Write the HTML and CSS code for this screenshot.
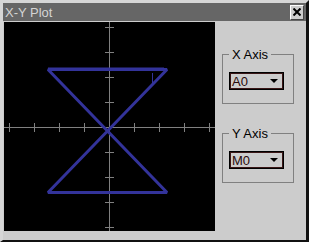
FILE: index.html
```html
<!DOCTYPE html>
<html lang="en">
<head>
    <meta charset="UTF-8">
    <title>X-Y Plot</title>
    <link rel="stylesheet" href="styles.css">
</head>
<body>
    <div class="window">
        <div class="titlebar">
            <span class="title">X-Y Plot</span>
            <button class="close-btn" aria-label="Close">
                <svg width="8" height="8" viewBox="0 0 8 8">
                    <path d="M0.5 0.5 L7.5 7.5 M7.5 0.5 L0.5 7.5" stroke="#000" stroke-width="2" fill="none"/>
                </svg>
            </button>
        </div>

        <div class="content">
            <div class="plot">
                <svg width="211" height="209" viewBox="0 0 211 209">
                    <g stroke="#808080" stroke-width="1" fill="none" shape-rendering="crispEdges">
                        <path d="M0 105.5 H211 M105.5 0 V209"/>
                        <path d="M5.5 101 V110 M30.5 101 V110 M55.5 101 V110 M80.5 101 V110 M130.5 101 V110 M155.5 101 V110 M180.5 101 V110 M205.5 101 V110"/>
                        <path d="M101 5.5 H110 M101 30.5 H110 M101 55.5 H110 M101 80.5 H110 M101 130.5 H110 M101 155.5 H110 M101 180.5 H110 M101 205.5 H110"/>
                    </g>
                    <g stroke="#33339a" fill="none" stroke-linejoin="bevel">
                        <path d="M44 47.5 H163 L44 170.5 H163 Z" stroke-width="3"/>
                        <path d="M44 46.5 H160 M92 171 H152" stroke-width="2"/>
                        <path d="M148.5 51 V63" stroke-width="1"/>
                    </g>
                </svg>
            </div>

            <div class="side">
                <fieldset class="group">
                    <legend>X Axis</legend>
                    <div class="combo">
                        <span>A0</span>
                        <i class="arrow"></i>
                    </div>
                </fieldset>

                <fieldset class="group">
                    <legend>Y Axis</legend>
                    <div class="combo">
                        <span>M0</span>
                        <i class="arrow"></i>
                    </div>
                </fieldset>
            </div>
        </div>
    </div>
</body>
</html>
```

FILE: styles.css
```css
body {
    margin: 0;
    background: #ccc;
    font-family: "Liberation Sans", Arial, sans-serif;
}
.window {
    width: 309px;
    height: 242px;
    box-sizing: border-box;
    background: #ccc;
    border-top: 3px solid #d6d6d6;
    border-left: 3px solid #d6d6d6;
    border-right: 3px solid #111;
    border-bottom: 2px solid #111;
    display: flex;
    flex-direction: column;
}
.titlebar {
    height: 18px;
    background: #666;
    display: flex;
    align-items: center;
    justify-content: space-between;
    padding: 0 2px 0 2px;
}
.title {
    color: #d4d4d4;
    font-size: 13px;
    line-height: 13px;
}
.close-btn {
    width: 14px;
    height: 15px;
    padding: 0;
    background: #ccc;
    border: 1px solid;
    border-color: #fff #444 #444 #fff;
    display: flex;
    align-items: center;
    justify-content: center;
}
.content {
    flex: 1;
    display: flex;
    padding: 1px 0 0 1px;
}
.plot {
    width: 211px;
    height: 209px;
    background: #000;
}
.plot svg {
    display: block;
}
.side {
    margin-left: 7px;
    padding-top: 26px;
}
.group {
    width: 72px;
    box-sizing: border-box;
    margin: 0 0 23px 0;
    padding: 0 0 13px 6px;
    border: 1px solid #808080;
}
.group legend {
    padding: 0 3px;
    font-size: 13px;
    line-height: 13px;
    color: #000;
}
.combo {
    width: 55px;
    height: 18px;
    margin-top: 11px;
    box-sizing: border-box;
    border: 1px solid #000;
    box-shadow: inset 0 0 0 1px #3a1616;
    display: flex;
    align-items: center;
    padding-left: 2px;
    font-size: 13px;
    color: #2a0a0a;
}
.arrow {
    margin-left: auto;
    margin-right: 5px;
    border-left: 4px solid transparent;
    border-right: 4px solid transparent;
    border-top: 4px solid #000;
}
```
